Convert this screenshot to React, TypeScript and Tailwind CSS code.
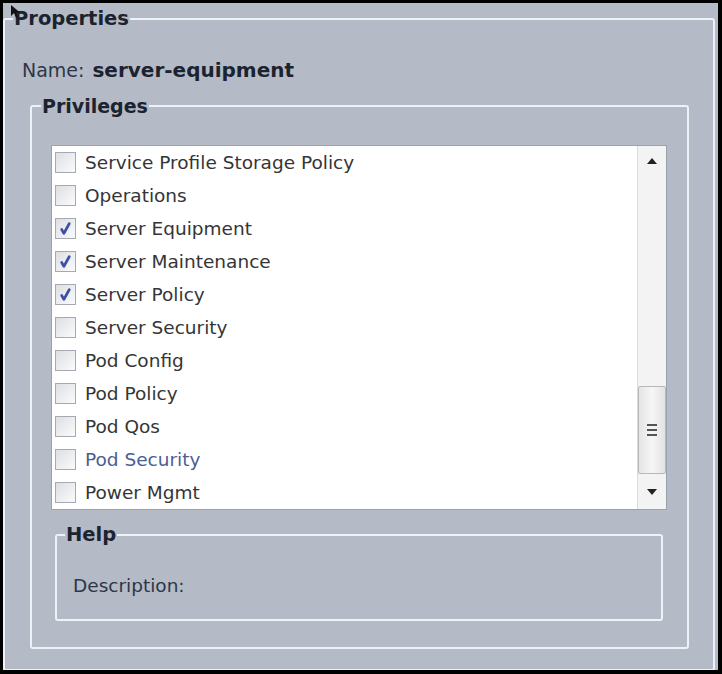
import React from "react";

const items: { label: string; checked: boolean; blue?: boolean }[] = [
  { label: "Service Profile Storage Policy", checked: false },
  { label: "Operations", checked: false },
  { label: "Server Equipment", checked: true },
  { label: "Server Maintenance", checked: true },
  { label: "Server Policy", checked: true },
  { label: "Server Security", checked: false },
  { label: "Pod Config", checked: false },
  { label: "Pod Policy", checked: false },
  { label: "Pod Qos", checked: false },
  { label: "Pod Security", checked: false, blue: true },
  { label: "Power Mgmt", checked: false },
];

function Checkbox({ checked }: { checked: boolean }) {
  return (
    <div className="w-[21px] h-[21px] border border-[#a3aab4] bg-gradient-to-br from-[#dcdfe3] to-[#fbfbfc] flex items-center justify-center shrink-0">
      {checked && (
        <svg width="15" height="15" viewBox="0 0 14 14">
          <path d="M3.5 8 L5.5 11.5 L10.5 2.5" fill="none" stroke="#3e4fa8" strokeWidth="2.6" strokeLinecap="round" strokeLinejoin="round" />
        </svg>
      )}
    </div>
  );
}

export default function App() {
  const font = { fontFamily: "'DejaVu Sans', 'Noto Sans', sans-serif" };
  return (
    <div className="w-[722px] h-[674px] bg-black pt-[3px] pl-[3px] overflow-hidden relative" style={font}>
      <div className="w-[715px] h-[667px] bg-[#b4bbc6] pt-[6px] overflow-hidden">
        <fieldset className="relative w-[712px] h-[662px] border-2 border-[#eef2f7] rounded-[3px]">
          <legend className="ml-[8px] px-[1px] text-[19.5px] leading-[20px] font-bold text-[#1c2330]">Properties</legend>
          <div className="mt-[29px] ml-[17px] h-[24px] flex items-center text-[#2e3648]">
            <span className="text-[19px]">Name:</span>
            <span className="ml-[8px] text-[20px] font-bold text-[#1c2330]">server-equipment</span>
          </div>
          <fieldset className="mt-[14px] ml-[25px] w-[659px] h-[553px] border-2 border-[#eef2f7] rounded-[3px]">
            <legend className="ml-[9px] px-[1px] text-[19px] leading-[20px] font-bold text-[#1c2330]">Privileges</legend>
            <div className="mt-[29px] ml-[19px] w-[616px] h-[365px] border border-[#9aa2ad] bg-white flex">
              <div className="flex-1 flex flex-col">
                {items.map((it) => (
                  <div key={it.label} className="h-[33px] flex items-center pl-[3px]">
                    <Checkbox checked={it.checked} />
                    <span
                      className={`ml-[9px] text-[18.5px] ${it.blue ? "text-[#4b5e92]" : "text-[#353535]"}`}
                    >
                      {it.label}
                    </span>
                  </div>
                ))}
              </div>
              <div className="w-[29px] bg-[#f3f3f3] border-l border-[#dcdcdc] flex flex-col items-center">
                <div className="h-[30px] flex items-center justify-center">
                  <svg width="10" height="6" viewBox="0 0 10 6"><path d="M0 6 L5 0 L10 6 Z" fill="#222" /></svg>
                </div>
                <div className="flex-1" />
                <div className="w-[28px] h-[88px] border border-[#b8b8b8] rounded-[2px] bg-gradient-to-r from-[#e4e4e4] via-[#f6f6f6] to-[#e2e2e2] flex flex-col items-center justify-center gap-[3px]">
                  <div className="w-[10px] h-[2px] bg-[#555]" />
                  <div className="w-[10px] h-[2px] bg-[#555]" />
                  <div className="w-[10px] h-[2px] bg-[#555]" />
                </div>
                <div className="h-[35px] flex items-center justify-center">
                  <svg width="10" height="6" viewBox="0 0 10 6"><path d="M0 0 L10 0 L5 6 Z" fill="#222" /></svg>
                </div>
              </div>
            </div>
            <fieldset className="mt-[15px] ml-[23px] w-[608px] h-[96px] border-2 border-[#eef2f7] rounded-[3px]">
              <legend className="ml-[8px] px-[1px] text-[19.5px] leading-[20px] font-bold text-[#1c2330]">Help</legend>
              <div className="mt-[27px] ml-[16px] text-[18.5px] text-[#2e3648]">Description:</div>
            </fieldset>
          </fieldset>
        </fieldset>
      </div>
      <svg className="absolute left-[11px] top-[5px]" width="10" height="14" viewBox="0 0 10 14">
        <path d="M0 0 L0 11 L3 8 L5 13 L7 12 L5 7.5 L9 7.5 Z" fill="#111" />
      </svg>
    </div>
  );
}
